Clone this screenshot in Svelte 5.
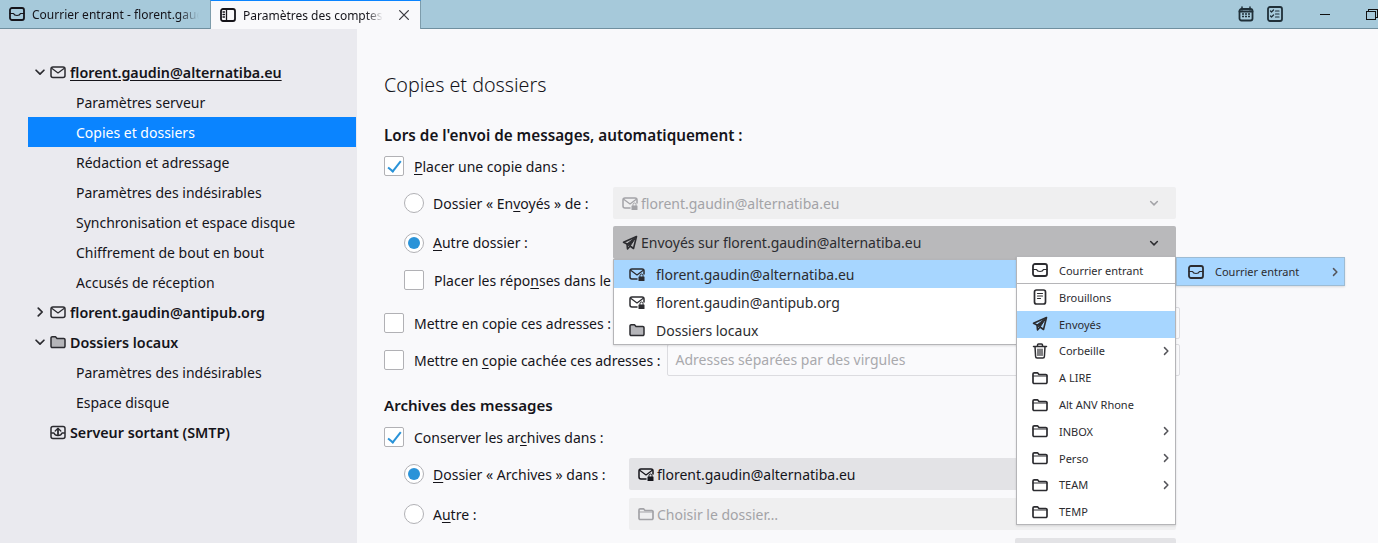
<script>
  const tree = [
    { kind: 'account', icon: 'mail', label: 'florent.gaudin@alternatiba.eu', open: true, current: true },
    { label: 'Paramètres serveur' },
    { label: 'Copies et dossiers', selected: true },
    { label: 'Rédaction et adressage' },
    { label: 'Paramètres des indésirables' },
    { label: 'Synchronisation et espace disque' },
    { label: 'Chiffrement de bout en bout' },
    { label: 'Accusés de réception' },
    { kind: 'account', icon: 'mail', label: 'florent.gaudin@antipub.org', closed: true },
    { kind: 'account', icon: 'folderFill', label: 'Dossiers locaux', open: true },
    { label: 'Paramètres des indésirables' },
    { label: 'Espace disque' },
    { kind: 'account', icon: 'outbox', label: 'Serveur sortant (SMTP)' }
  ];

  const accounts = [
    { icon: 'mailLock', label: 'florent.gaudin@alternatiba.eu', active: true },
    { icon: 'mailLock', label: 'florent.gaudin@antipub.org' },
    { icon: 'folderFill', label: 'Dossiers locaux' }
  ];

  const folders = [
    { icon: 'draft', label: 'Brouillons' },
    { icon: 'send', label: 'Envoyés', active: true },
    { icon: 'trash', label: 'Corbeille', more: true },
    { icon: 'folder', label: 'A LIRE' },
    { icon: 'folder', label: 'Alt ANV Rhone' },
    { icon: 'folder', label: 'INBOX', more: true },
    { icon: 'folder', label: 'Perso', more: true },
    { icon: 'folder', label: 'TEAM', more: true },
    { icon: 'folder', label: 'TEMP' }
  ];
</script>

{#snippet icon(name, size = 16)}
  <svg class="icon" width={size} height={size} viewBox="0 0 16 16" fill="none" stroke="currentColor" stroke-width="1.5" stroke-linecap="round" stroke-linejoin="round">
    {#if name === 'inbox'}
      <rect x="1" y="2" width="14" height="12" rx="2" stroke-width="1.800" />
      <path d="M1 7.500h3.500c.5 1.400 1.800 2 3.500 2s3-.6 3.500-2H15" stroke-width="1.200" />
    {:else if name === 'tabs'}
      <rect x="1" y="2" width="14" height="12" rx="2" stroke-width="1.800" />
      <path d="M6.500 2v12M3 5h1.500M3 7.500h1.500M3 10h1.500" stroke-width="1.300" />
    {:else if name === 'mail'}
      <rect x="1" y="3" width="14" height="10.500" rx="2" />
      <path d="M2 4.500 8 9l6-4.500" stroke-width="1.200" />
    {:else if name === 'mailLock'}
      <path d="M8 13H3a2 2 0 0 1-2-2V5a2 2 0 0 1 2-2h10a2 2 0 0 1 2 2v3" />
      <path d="M2 4.500 8 9l6-4.500" stroke-width="1.200" />
      <rect x="9.500" y="10.500" width="6" height="4.500" rx=".5" fill="currentColor" stroke="none" />
      <path d="M11 10.500V9.500a1.500 1.500 0 0 1 3 0v1" stroke-width="1" />
    {:else if name === 'folder'}
      <path d="M1 4a1.200 1.200 0 0 1 1.200-1.200h3.300L7 4.500h6.800A1.200 1.200 0 0 1 15 5.700v6.600a1.200 1.200 0 0 1-1.200 1.200H2.200A1.200 1.200 0 0 1 1 12.300z" stroke-width="1.700" />
      <path d="M1 6h14" stroke-width="1" />
    {:else if name === 'folderFill'}
      <path d="M1 4a1.200 1.200 0 0 1 1.200-1.200h3.300L7 4.500h6.800A1.200 1.200 0 0 1 15 5.700v6.600a1.200 1.200 0 0 1-1.200 1.200H2.200A1.200 1.200 0 0 1 1 12.300z" fill="#b5b5b9" />
    {:else if name === 'send'}
      <path d="M14.500 1.500 1.500 7.200 5 9l.5 5 2.600-3 3.400 2.500z" stroke-width="1.600" />
      <path d="M5 9l9.500-7.500L8.100 11z" fill="currentColor" stroke-width="1" />
    {:else if name === 'draft'}
      <rect x="2.500" y="1" width="11" height="14" rx="2" stroke-width="1.700" />
      <path d="M5.500 4.500h5M5.500 7h5M5.500 9.500h3" stroke-width="1.200" />
    {:else if name === 'trash'}
      <path d="M1.500 3.500h13M5.500 3.500V2a1 1 0 0 1 1-1h3a1 1 0 0 1 1 1v1.500M3 3.500l.6 10a1.500 1.500 0 0 0 1.500 1.500h5.800a1.500 1.500 0 0 0 1.500-1.500l.6-10" />
      <path d="M6 6v6.500M8 6v6.500M10 6v6.500" stroke-width="1.200" />
    {:else if name === 'outbox'}
      <rect x="1" y="2.500" width="14" height="12" rx="2" />
      <path d="M8 10.500V5" stroke-width="1.800" />
      <path d="M5.200 7 8 4.300 10.800 7M1.500 9h2.500c.4 1.500 2 2.500 4 2.500s3.600-1 4-2.500h2.500" stroke-width="1.300" />
    {:else if name === 'calendar'}
      <path d="M4 1v3M12 1v3" />
      <rect x="1.500" y="3" width="13" height="11.500" rx="2" fill="none" stroke-width="1.800" />
      <path d="M1.500 5.500h13" stroke-width="1.800" />
      <path d="M4 8h2M7 8h2M10 8h2M4 10.500h2M7 10.500h2M10 10.500h2" stroke-width="1.300" stroke-linecap="butt" />
    {:else if name === 'tasks'}
      <rect x="1" y="1" width="14" height="14" rx="2" stroke-width="1.800" />
      <path d="m3.500 5 1 1 2-2M3.500 10l1 1 2-2" stroke-width="1.200" />
      <path d="M8.500 5H12M8.500 8H12M8.500 11H12" stroke-width="1.200" />
    {:else if name === 'chevronDown'}
      <path d="m3.500 6 4.500 4.500L12.500 6" stroke-width="2" />
    {:else if name === 'chevronRight'}
      <path d="m6 3.500 4.500 4.500L6 12.500" stroke-width="2" />
    {:else if name === 'close'}
      <path d="m3 3 10 10M13 3 3 13" />
    {/if}
  </svg>
{/snippet}

<div class="window">
  <header class="tabbar">
    <div class="tab">
      {@render icon('inbox')}
      <span class="tabTitle">Courrier entrant - florent.gaudin@alternatiba.eu</span>
    </div>
    <div class="tab active">
      {@render icon('tabs')}
      <span class="tabTitle">Paramètres des comptes Courrier</span>
      <span class="tabClose">{@render icon('close', 14)}</span>
    </div>
    <div class="spacer"></div>
    <div class="tools">
      {@render icon('calendar')}
      {@render icon('tasks')}
    </div>
    <div class="minimize"></div>
    <div class="restore"></div>
  </header>

  <div class="body">
    <nav class="sidebar">
      {#each tree as item}
        {#if item.kind === 'account'}
          <div class="treeRow account">
            <span class="twisty">
              {#if item.open}{@render icon('chevronDown', 14)}{/if}
              {#if item.closed}{@render icon('chevronRight', 14)}{/if}
            </span>
            {@render icon(item.icon)}
            <span class:current={item.current}>{item.label}</span>
          </div>
        {:else}
          <div class="treeRow child" class:selected={item.selected}>{item.label}</div>
        {/if}
      {/each}
    </nav>

    <main class="content">
      <h1>Copies et dossiers</h1>

      <h2>Lors de l'envoi de messages, automatiquement :</h2>
      <div class="row check">
        <span class="checkbox on"></span>
        <span><u>P</u>lacer une copie dans :</span>
      </div>
      <div class="row sub first">
        <span class="radio"></span>
        <span class="radioLabel">Dossier « En<u>v</u>oyés » de :</span>
        <div class="select disabled grow">
          {@render icon('mailLock')}
          <span>florent.gaudin@alternatiba.eu</span>
          <span class="caret">{@render icon('chevronDown', 12)}</span>
        </div>
      </div>
      <div class="row sub second open">
        <span class="radio on"></span>
        <span class="radioLabel"><u>A</u>utre dossier :</span>
        <div class="select pressed grow">
          {@render icon('send')}
          <span>Envoyés sur florent.gaudin@alternatiba.eu</span>
          <span class="caret">{@render icon('chevronDown', 12)}</span>
        </div>
      </div>
      <div class="row sub reply">
        <span class="checkbox"></span>
        <span>Placer les répo<u>n</u>ses dans le dossier du message auquel il est répondu</span>
      </div>
      <div class="row cc">
        <span class="checkbox"></span>
        <span class="ccLabel">Mettre en copie ces adresses :</span>
        <div class="textbox"></div>
      </div>
      <div class="row bcc">
        <span class="checkbox"></span>
        <span class="ccLabel">Mettre en <u>c</u>opie cachée ces adresses :</span>
        <div class="textbox">Adresses séparées par des virgules</div>
      </div>

      <h2 class="archives">Archives des messages</h2>
      <div class="row check keep">
        <span class="checkbox on"></span>
        <span>Conserver les ar<u>c</u>hives dans :</span>
      </div>
      <div class="row sub first">
        <span class="radio on"></span>
        <span class="radioLabel wide"><u>D</u>ossier « Archives » dans :</span>
        <div class="select grow plain">
          {@render icon('mailLock')}
          <span>florent.gaudin@alternatiba.eu</span>
        </div>
      </div>
      <div class="row sub second">
        <span class="radio"></span>
        <span class="radioLabel wide">A<u>u</u>tre :</span>
        <div class="select disabled grow">
          {@render icon('folder')}
          <span>Choisir le dossier…</span>
        </div>
      </div>
      <div class="row buttonRow">
        <div class="stub"></div>
      </div>

      <!-- open popups of the second select -->
      <div class="menu accounts">
        {#each accounts as entry}
          <div class="menuItem" class:active={entry.active}>
            {@render icon(entry.icon)}
            <span>{entry.label}</span>
          </div>
        {/each}
      </div>

      <div class="menu folders">
        <div class="folderItem inboxItem">
          {@render icon('inbox')}
          <span>Courrier entrant</span>
        </div>
        {#each folders as entry}
          <div class="folderItem" class:active={entry.active}>
            {@render icon(entry.icon)}
            <span>{entry.label}</span>
            {#if entry.more}
              <span class="more">{@render icon('chevronRight', 12)}</span>
            {/if}
          </div>
        {/each}
      </div>

      <div class="menu flyout">
        {@render icon('inbox')}
        <span>Courrier entrant</span>
        <span class="more">{@render icon('chevronRight', 12)}</span>
      </div>
    </main>
  </div>
</div>

<style>
  :global(body) {
    margin: 0;
    overflow: hidden;
  }

  .window {
    height: 543px;
    overflow: hidden;
    display: flex;
    flex-direction: column;
    font-family: "Noto Sans", "Open Sans", sans-serif;
    font-size: 14px;
    color: #15141a;
    background: #f9f9fb;
  }

  .icon {
    display: block;
    flex: none;
  }

  u {
    text-underline-offset: 2px;
  }

  .tabbar {
    flex: none;
    height: 28px;
    display: flex;
    align-items: center;
    background: #a6c9da;
    border-bottom: 1px solid #6f8f9f;
  }

  .tab {
    box-sizing: border-box;
    width: 211px;
    height: 29px;
    padding-left: 9px;
    display: flex;
    align-items: center;
    gap: 7px;
    font-size: 12px;
    border-right: 1px solid #7d9cab;
  }

  .tab.active {
    align-self: flex-start;
    width: 211px;
    background: #f9f9fb;
    border-top: 1px solid #0a84ff;
    border-left: 1px solid #7d9cab;
    margin-left: -1px;
    position: relative;
  }

  .tabTitle {
    flex: 1;
    overflow: hidden;
    white-space: nowrap;
    mask-image: linear-gradient(to right, #000 88%, transparent 100%);
  }

  .tab:first-child .tabTitle {
    margin-right: 11px;
  }

  .tabClose {
    margin: 0 9px 0 7px;
    color: #3b3b40;
  }

  .spacer {
    flex: 1;
  }

  .tools {
    display: flex;
    gap: 13px;
    margin-right: 37px;
    color: #1f2f38;
  }

  .minimize {
    width: 10px;
    height: 1px;
    background: #111;
    margin-right: 36px;
  }

  .restore {
    box-sizing: border-box;
    width: 10px;
    height: 9px;
    margin-top: 3px;
    margin-right: 2px;
    border: 1px solid #111;
    box-shadow: 2px -2px 0 -1px #a6c9da, 2px -2px 0 0 #111;
  }

  .body {
    flex: 1;
    display: flex;
    min-height: 0;
  }

  .sidebar {
    box-sizing: border-box;
    flex: none;
    width: 357px;
    padding: 28px 1px 0 28px;
    background: #eaeaef;
  }

  .treeRow {
    height: 30px;
    display: flex;
    align-items: center;
    white-space: nowrap;
  }

  .account {
    font-weight: 600;
    font-size: 14.300px;
    padding-left: 5px;
    gap: 3px;
  }

  .twisty {
    width: 14px;
    display: block;
  }

  .account .icon {
    margin-right: 1px;
    color: #2b2b30;
  }

  .current {
    text-decoration: underline;
    text-underline-offset: 2px;
  }

  .child {
    padding-left: 48px;
  }

  .child.selected {
    background: #0a84ff;
    color: #fff;
  }

  .content {
    position: relative;
    flex: 1;
    min-width: 0;
    padding: 41px 0 0 27px;
  }

  h1 {
    margin: 0 0 20px;
    height: 30px;
    line-height: 30px;
    font-size: 19.700px;
    font-weight: 300;
  }

  h2 {
    margin: 0;
    height: 30px;
    line-height: 30px;
    font-size: 15.250px;
    font-weight: 600;
  }

  h2.archives {
    margin-top: 14px;
    font-size: 15.100px;
  }

  .row {
    display: flex;
    align-items: center;
    white-space: nowrap;
  }

  .check {
    height: 28px;
    margin-top: 2px;
    gap: 10px;
  }

  .check.keep {
    margin-top: 3px;
  }

  .sub {
    padding-left: 20px;
    height: 32px;
  }

  .sub.first {
    margin-top: 7px;
  }

  .sub.second {
    margin-top: 8px;
  }

  .sub.second.open {
    margin-top: 7px;
    height: 33px;
  }

  .sub.reply {
    height: 28px;
    margin-top: 7px;
    gap: 10px;
  }

  .cc,
  .bcc {
    height: 32px;
    gap: 10px;
  }

  .cc {
    margin-top: 13px;
  }

  .bcc {
    margin-top: 5px;
  }

  .checkbox {
    box-sizing: border-box;
    flex: none;
    position: relative;
    width: 20px;
    height: 20px;
    border: 1px solid #b1b1b5;
    border-radius: 2px;
    background: #fff;
  }

  .checkbox.on::after {
    content: '';
    position: absolute;
    left: 6px;
    top: 1px;
    width: 5px;
    height: 12px;
    border: solid #2a93d8;
    border-width: 0 2px 2px 0;
    transform: rotate(38deg);
  }

  .radio {
    box-sizing: border-box;
    flex: none;
    position: relative;
    width: 20px;
    height: 20px;
    margin-right: 9px;
    border: 1px solid #b1b1b5;
    border-radius: 50%;
    background: #fff;
  }

  .radio.on::after {
    content: '';
    position: absolute;
    inset: 3px;
    border-radius: 50%;
    background: #2a93d8;
  }

  .radioLabel {
    width: 180px;
    flex: none;
  }

  .radioLabel.wide {
    width: 196px;
  }

  .select {
    box-sizing: border-box;
    height: 32px;
    padding: 0 16px 0 9px;
    display: flex;
    align-items: center;
    gap: 3px;
    background: #e3e3e6;
    border-radius: 2px;
  }

  .grow {
    width: 547px;
    flex: none;
  }

  .sub:not(:has(.wide)) .grow {
    width: 563px;
  }

  .select.disabled {
    background: #efeff0;
    color: #a3a3a7;
  }

  .select.pressed {
    height: 33px;
    background: #b9b9bb;
    color: #2c2c30;
  }

  .caret {
    margin-left: auto;
  }

  .ccLabel {
    flex: none;
  }

  .textbox {
    box-sizing: border-box;
    flex: 1;
    height: 32px;
    margin-right: 198px;
    margin-left: -4px;
    padding: 0 8px;
    line-height: 30px;
    color: #a9a9ad;
    background: #fafafc;
    border: 1px solid #dcdce0;
    border-radius: 2px;
  }

  .buttonRow {
    margin-top: 8px;
    padding-left: 631px;
  }

  .stub {
    width: 161px;
    height: 32px;
    background: #e3e3e6;
    border-radius: 2px;
  }

  .menu {
    position: absolute;
    box-sizing: border-box;
    background: #fff;
    border: 1px solid #b5b5b8;
    box-shadow: 0 1px 2px rgba(0, 0, 0, 0.12);
  }

  .accounts {
    left: 256px;
    top: 230px;
    width: 405px;
    height: 86px;
  }

  .menuItem {
    height: 28px;
    padding-left: 15px;
    display: flex;
    align-items: center;
    gap: 11px;
    color: #2c2c30;
  }

  .menuItem.active,
  .folderItem.active {
    background: #a7d6ff;
  }

  .folders {
    left: 659px;
    top: 227px;
    width: 160px;
    height: 269px;
    font-size: 11px;
  }

  .folderItem {
    height: 26.800px;
    padding-left: 15px;
    display: flex;
    align-items: center;
    gap: 11px;
    color: #2c2c30;
  }

  .inboxItem {
    height: 26px;
    border-bottom: 1px solid #b5b5b8;
  }

  .more {
    margin-left: auto;
    margin-right: 3px;
    color: #55555a;
  }

  .flyout {
    left: 819px;
    top: 228px;
    width: 169px;
    height: 29px;
    padding-left: 11px;
    display: flex;
    align-items: center;
    gap: 11px;
    font-size: 11px;
    color: #2c2c30;
    background: #a7d6ff;
    border-color: #9dbcd4;
  }
</style>
